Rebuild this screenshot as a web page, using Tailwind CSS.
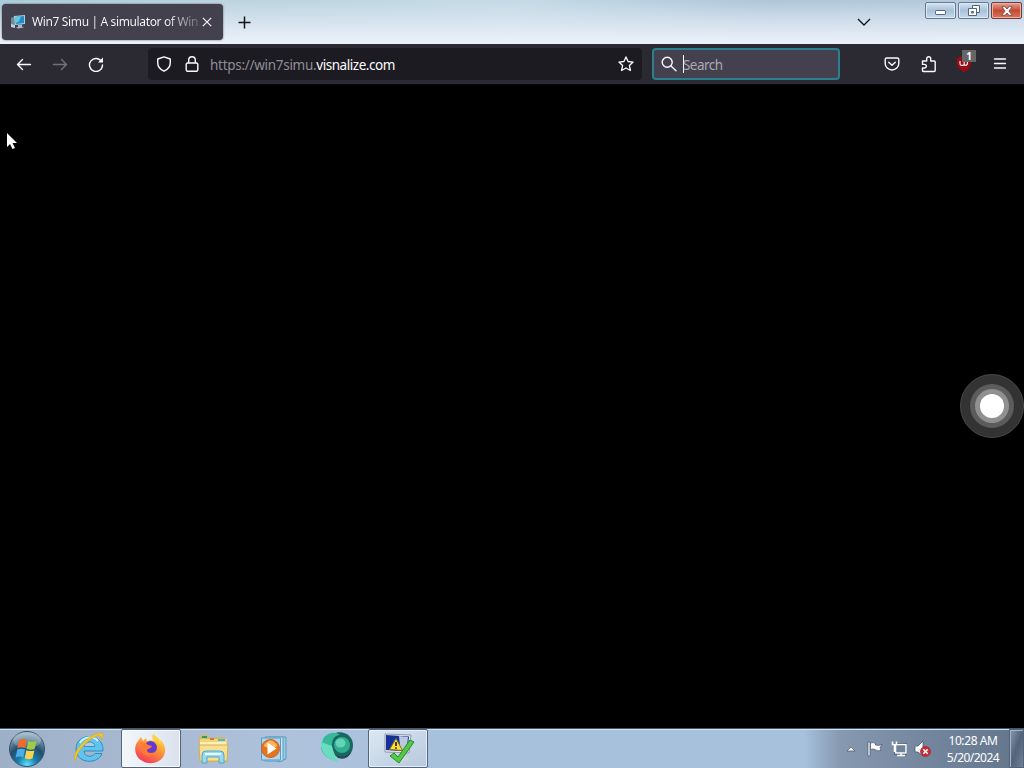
<!DOCTYPE html>
<html lang="en">
<head>
<meta charset="utf-8">
<title>Win7 Simu</title>
<script src="https://cdn.jsdelivr.net/npm/@tailwindcss/browser@4"></script>
</head>
<body class="bg-black overflow-hidden">
<div class="relative flex h-[768px] w-[1024px] flex-col overflow-hidden bg-black font-['Noto_Sans','Open_Sans',sans-serif]">
  <!-- Title bar -->
  <header class="flex h-11 shrink-0 items-start bg-[linear-gradient(90deg,#a9cbd5_0%,#bcd3de_22%,#c5dae5_50%,#aec6d8_75%,#b4cadd_100%)]">
    <div class="flex h-11 w-full items-start bg-linear-to-b from-transparent via-[#dde7f2]/75 to-[#edf2fb]">
      <div class="mt-1 ml-0.5 flex h-9 w-[221px] items-center rounded bg-[#42414d] pl-2 shadow-[0_0_2px_#4b5563]">
        <svg class="h-4 w-4 shrink-0" viewBox="0 0 16 16"><path d="M1 4l4-2v10l-4-1z" fill="#718a9d"/><path d="M4 2l11-1v9l-10 1z" fill="#a9cfe3"/><path d="M5 3l9-1v7l-8 1z" fill="#218cc8"/><path d="M5 3l6-.6-2 5-4 2z" fill="#64c6da"/><path d="M8 11l4-.5v2l2 1-6 1-2-1 2-.5z" fill="#a9bac5"/><path d="M1 10l4 1v3l-4-1z" fill="#bed1df"/></svg>
        <div class="ml-1.5 w-[166px] whitespace-nowrap bg-linear-to-r from-[#fbfbfe] from-80% to-[#fbfbfe]/25 bg-clip-text text-[12px] leading-5 tracking-[-0.36px] text-transparent">Win7 Simu | A simulator of Win</div>
        <svg class="ml-px h-4 w-4 shrink-0" viewBox="0 0 16 16" fill="none" stroke="#f4f4f8" stroke-width="1.2"><path d="M3.800 3.800l8.400 8.400M12.200 3.800l-8.400 8.400"/></svg>
      </div>
      <svg class="mt-[14px] ml-[13px] h-4 w-4" viewBox="0 0 16 16" stroke="#15141a" stroke-width="1.5"><path d="M2.500 8.500h12M8.500 2.500v12"/></svg>
      <svg class="mt-[14px] ml-auto h-4 w-4" viewBox="0 0 16 16" fill="none" stroke="#15141a" stroke-width="1.4"><path d="M2 5l6 6 6-6"/></svg>
      <div class="mt-0.5 mr-0.5 ml-[53px] flex gap-[2px]">
        <div class="flex h-[17px] w-[31px] items-center justify-center rounded-[2px] border border-[#66778f] bg-linear-to-b from-[#d5e3f1] via-[#a9c1d9] to-[#c4dbed] shadow-[inset_0_0_0_1px_#dceaf5]"><svg class="mt-1 h-[5px] w-[11px]" viewBox="0 0 11 5"><rect x=".5" y=".5" width="10" height="4" rx=".7" fill="#fff" stroke="#56667c"/></svg></div>
        <div class="flex h-[17px] w-[31px] items-center justify-center rounded-[2px] border border-[#66778f] bg-linear-to-b from-[#d5e3f1] via-[#a9c1d9] to-[#c4dbed] shadow-[inset_0_0_0_1px_#dceaf5]"><svg class="h-[11px] w-[12px]" viewBox="0 0 12 11" fill="none"><path d="M4.500.5h7v7h-3v-4h-4z" fill="#fff" stroke="#56667c"/><path d="M.5 3.500h8v7h-8z" fill="#fff" stroke="#56667c"/><path d="M3.500 6.500h2v1.500h-2z" fill="#8ea6c4" stroke="#56667c"/></svg></div>
        <div class="flex h-[17px] w-[31px] items-center justify-center rounded-[2px] border border-[#713a3c] bg-linear-to-b from-[#e5a093] via-[#c44b33] to-[#d9755b] shadow-[inset_0_0_0_1px_#efb1a4]"><svg class="h-[10px] w-[12px]" viewBox="0 0 12 10"><path d="M.8.700h3.200L6 3l2-2.300h3.200L7.900 5l3.300 4.300H8L6 7 4 9.300H.8L4.100 5z" fill="#fff" stroke="#714648" stroke-width=".8"/></svg></div>
      </div>
    </div>
  </header>
  <!-- Navigation toolbar -->
  <nav class="flex h-10 shrink-0 items-center bg-[#2b2a33] text-[13.5px]">
    <svg class="ml-4 h-4 w-4" viewBox="0 0 16 16" fill="none" stroke="#fbfbfe" stroke-width="1.4" stroke-linecap="round" stroke-linejoin="round"><path d="M14.500 8.500h-13M6.500 3.500l-5 5 5 5"/></svg>
    <svg class="ml-5 h-4 w-4" viewBox="0 0 16 16" fill="none" stroke="#73727a" stroke-width="1.4" stroke-linecap="round" stroke-linejoin="round"><path d="M1.500 8.500h13M9.500 3.500l5 5-5 5"/></svg>
    <svg class="ml-5 h-4 w-4" viewBox="0 0 16 16" fill="none" stroke="#fbfbfe" stroke-width="1.4" stroke-linecap="round"><path d="M13.500 5.500A6.500 6.500 0 1 0 14.500 9"/><path d="M15 1.500v5H10z" fill="#fbfbfe" stroke="none"/></svg>
    <div class="ml-11 flex h-8 w-[494px] items-center rounded bg-[#1c1b22]">
      <svg class="ml-2 h-4 w-4" viewBox="0 0 16 16" fill="none" stroke="#fbfbfe" stroke-width="1.4" stroke-linejoin="round"><path d="M8 .8L14.300 3v3.500c0 4-2.300 7-6.300 8.700C4 13.500 1.700 10.500 1.700 6.500V3z"/></svg>
      <svg class="ml-3 h-4 w-4" viewBox="0 0 16 16" fill="none" stroke="#fbfbfe" stroke-width="1.4"><rect x="2.200" y="7" width="11.600" height="8.200" rx="1.500"/><path d="M4.700 7V4a3.300 3.300 0 0 1 6.600 0v3"/></svg>
      <div class="mt-0.5 ml-[10px] w-[250px] whitespace-nowrap leading-5 tracking-[-0.46px] text-[#fbfbfe]"><span class="tracking-[-0.29px] text-[#8f8e96]">https://win7simu.</span>visnalize.com</div>
      <svg class="mr-2 ml-auto h-4 w-4" viewBox="0 0 16 16" fill="none" stroke="#fbfbfe" stroke-width="1.3" stroke-linejoin="round"><path d="M8 .9l2.100 4.600 5 .600-3.700 3.400 1 5L8 12l-4.400 2.500 1-5L.9 6.100l5-.600z"/></svg>
    </div>
    <div class="ml-[10px] flex h-8 w-[188px] items-center rounded border-2 border-[#29818d] bg-[#42414d]">
      <svg class="ml-[7px] h-4 w-4" viewBox="0 0 16 16" fill="none" stroke="#fbfbfe" stroke-width="1.400" stroke-linecap="round"><circle cx="6.200" cy="6.200" r="5"/><path d="M10 10l5 4.700"/></svg>
      <div class="ml-[6px] h-[18px] w-px bg-white"></div>
      <div class="mt-0.5 -ml-px leading-5 tracking-[-0.55px] text-[#aaa9b2]">Search</div>
    </div>
    <svg class="ml-11 h-4 w-4" viewBox="0 0 16 16" fill="none" stroke="#fbfbfe" stroke-width="1.400" stroke-linecap="round" stroke-linejoin="round"><path d="M2.500 2h11a1.300 1.300 0 0 1 1.300 1.300v4.200a6.800 6.500 0 0 1-13.600 0V3.300A1.300 1.300 0 0 1 2.500 2z"/><path d="M4.700 6.200L8 9.300l3.300-3.100"/></svg>
    <svg class="ml-5 h-[18px] w-[18px]" viewBox="0 0 18 18" fill="none" stroke="#fbfbfe" stroke-width="1.400" stroke-linejoin="round"><path d="M2.500 6h4.200V3.700a2 2 0 0 1 4 0V6h3.500q1 0 1 1v8.500q0 1-1 1H3.500q-1 0-1-1V13h2a1.800 1.800 0 0 0 0-3.600h-2z"/></svg>
    <div class="relative ml-4 h-5 w-5">
      <svg class="h-5 w-5" viewBox="0 0 20 20"><path d="M10 2l7 2v5c0 4.500-3 7.200-7 9-4-1.800-7-4.500-7-9V4z" fill="#980b12"/><path d="M6 7v2.800q0 1.500 1.500 1.500H9q1.200 0 1.200-1.500V7.500M10.200 9.800q0 1.500 1.300 1.500 2 0 2-2.200T11.500 7" fill="none" stroke="#eee" stroke-width="1.200"/></svg>
      <span class="absolute -top-[4px] left-[8px] flex h-[12px] w-[14px] items-center justify-center bg-[#666] text-[10px] leading-none font-bold text-white">1</span>
    </div>
    <svg class="ml-[18px] h-4 w-4" viewBox="0 0 16 16" stroke="#fbfbfe" stroke-width="1.300" stroke-linecap="round"><path d="M2.500 3h11M2.500 7.500h11M2.500 12h11"/></svg>
  </nav>
  <main class="grow border-t border-[#08080b] bg-black"></main>
  <!-- Taskbar -->
  <footer class="flex h-10 shrink-0 items-center border-t border-[#4a5568] bg-[linear-gradient(90deg,#9db0c8_0%,#a6b8d0_12%,#afc2dc_28%,#a7c1dd_43%,#a7c1dd_78.500%,#8699b1_82%,#75879e_90%,#62758b_100%)] shadow-[inset_0_1px_0_#d2e2f5]">
    <svg class="ml-2 h-[38px] w-[38px]" viewBox="0 0 38 38">
      <defs><radialGradient id="orb" cx=".5" cy=".95" r=".9"><stop stop-color="#60e5ff"/><stop offset=".3" stop-color="#187fae"/><stop offset=".6" stop-color="#244d6a"/><stop offset="1" stop-color="#8fafbf"/></radialGradient></defs>
      <circle cx="19" cy="19" r="17.500" fill="url(#orb)" stroke="#355168"/><ellipse cx="19" cy="10" rx="14" ry="8" fill="#fff" opacity=".22"/>
      <path d="M11 10.500q4-2.500 7.900-.5l-1.700 8q-3.500-1.500-7.700.2z" fill="#ef6a2c"/><path d="M20.300 10.900q3.700 1.800 8.200 0l-1.900 8q-4 1.600-8-.2z" fill="#9fcc45"/><path d="M9.300 19.500q4-1.700 7.700.1l-1.700 7.800q-3.800-1.800-7.700.1z" fill="#49aeea"/><path d="M18.400 20.200q3.700 1.700 8 .2l-1.900 8.100q-4 1.500-7.800-.3z" fill="#fcd14c"/>
    </svg>
    <svg class="ml-[26px] h-[34px] w-[34px] -translate-y-px" viewBox="0 0 34 34" fill="none">
      <path d="M31 20H12c.3 6 8 7 11 2.500h7C26 34 4 33 4 18 4 1 32 1 31 20z" fill="#62c4ee" stroke="#288ec3"/><path d="M12 15.500h11c-.5-6-10.500-6-11 0z" fill="#b4c9df" stroke="#3396c9"/><path d="M8 12c3-6 13-8 18-2" stroke="#c5f3ff" stroke-width="2"/><path d="M4 30C-3 25 14 4 28 2c4 0 4 3 1 7 1-4-1-5-4-4C16 8 3 22 4 30z" fill="#f0c82f" stroke="#d9a51c" stroke-width=".6"/>
    </svg>
    <div class="ml-[15px] flex h-[39px] w-[60px] items-center justify-center rounded-[2px] border border-[#53647d] bg-linear-to-r from-[#f2f7fa] to-[#dce2ed] shadow-[inset_0_0_0_1px_#f6faff]">
      <svg class="h-8 w-8 -translate-x-px" viewBox="0 0 32 32">
        <defs><linearGradient id="fox" x1=".8" y1="0" x2=".25" y2="1"><stop stop-color="#ffe84d"/><stop offset=".45" stop-color="#ff9838"/><stop offset="1" stop-color="#f1335d"/></linearGradient></defs>
        <path d="M4 8l3-4 2 4 3-3 1 3c3-1 5-1 7 0-2-3-2-5-1-7 3 2 6 4 7 7l1-1c3 4 5 8 4 12-2 13-21 15-28 4C0 17 1 12 4 8z" fill="url(#fox)"/>
        <circle cx="16.500" cy="14.500" r="6.500" fill="#643ad0"/><path d="M5 10c4-1 7-1 9 2l4 1c-1 3-4 2-5 4 0 4 7 4 10 0-2 7-10 8-14 3-3-3-2-6-1-8z" fill="#ff7a32"/><path d="M19 2c3 3 7 5 8 10-2-2-4-4-7-4z" fill="#ffd53d"/>
      </svg>
    </div>
    <svg class="ml-4 h-8 w-8" viewBox="0 0 32 32">
      <path d="M2 5l2-3h7l2 3h5V4h10v3h2v22H2z" fill="#d7b85f"/><path d="M3 6h27v21H3z" fill="#f0d37f"/><path d="M3 9h26v4H3z" fill="#fff0b2"/><path d="M2 12h29l-1 16H3z" fill="#f8df91" stroke="#cfae56"/><path d="M5 4h5" stroke="#27a16c" stroke-width="2"/><path d="M13 6h4" stroke="#d87634" stroke-width="2"/><path d="M21 7h7" stroke="#4cb7e2" stroke-width="2"/><path d="M5 30v-8q0-4 4-4h14q4 0 4 4v8h-5v-6H10v6z" fill="#9bd8ef" stroke="#4ba8cb"/><path d="M8 21h16" stroke="#e3faff" stroke-width="2"/>
    </svg>
    <svg class="ml-[31px] h-7 w-7" viewBox="0 0 28 28">
      <path d="M8 2h18v22l-8 3z" fill="#9ac9e3" stroke="#5c9cbd"/><path d="M5 2h18v24H5z" fill="#c8e5f2" stroke="#589cc2"/><path d="M1.500 3h19v22h-19z" fill="#b2d5e8" stroke="#589cc2"/><circle cx="10.500" cy="13.500" r="9" fill="#e9731b" stroke="#c8642c"/><path d="M3.500 11q7-11 14 0-7 4-14 0z" fill="#ffb55d"/><path d="M7.500 7.500l9 6-9 6z" fill="#fff"/>
    </svg>
    <svg class="mb-1 ml-[32px] h-[34px] w-[34px]" viewBox="0 0 34 34">
      <path d="M13 4C22-1 33 5 33 15c0 9-6 14-13 13-8-2-11-9-10-17z" fill="#1b665f"/><path d="M3 9C7 2 16 1 20 5c-6 0-8 5-8 11 1 7 3 10 6 15C10 30 1 25 1 17z" fill="#35b999"/><path d="M1 12l11 4c1 6 4 11 7 16C8 30 0 23 1 12z" fill="#68ddc0"/><circle cx="22" cy="15" r="8" fill="#2fae91"/><ellipse cx="20.500" cy="13" rx="5" ry="4.500" fill="#7be2c7" opacity=".7"/><path d="M16 25q8 4 15-3-4 9-13 6z" fill="#244957"/>
    </svg>
    <div class="ml-[14px] flex h-[39px] w-[60px] items-center justify-center rounded-[2px] border border-[#53647d] bg-linear-to-br from-[#dce8f2] to-[#b7c8de] shadow-[inset_0_0_0_1px_#e6f0fa]">
      <svg class="h-[34px] w-[34px] -translate-y-px" viewBox="0 0 34 34"><path d="M4 3l26 1-2 18-24-1z" fill="#e3e7ed" stroke="#8f9bad"/><path d="M5 4l23 1.500-1.500 15L5 19z" fill="#16309b"/><path d="M18 5l9 1-1.500 14-6-1z" fill="#bac9df"/><path d="M11 26l13-1 4 3-11 4z" fill="#d1d6d9"/><path d="M15 7.500L21.500 19.500 8.500 18.500z" fill="#ffe038" stroke="#887015"/><path d="M15 11v4M15 16.200v1.500" stroke="#222" stroke-width="1.700"/><path d="M9 25l4-3 4 4L29 9l4 2-15 21z" fill="#55c945" stroke="#258b2d"/></svg>
    </div>
    <!-- Notification area -->
    <svg class="ml-auto h-[6px] w-[10px]" viewBox="0 0 10 6"><path d="M1 5l4-4 4 4z" fill="#fff" stroke="#44546b" stroke-width=".7"/></svg>
    <svg class="ml-[11px] h-4 w-4" viewBox="0 0 16 16"><path d="M1 1h2v14H1z" fill="#fff" stroke="#41536a" stroke-width=".7"/><path d="M3.500 2q3-1 5 .5v1.500q3 1 6.500-.5l-2 3 1 3q-4 1-6-1-2-1-4.500 0z" fill="#fff" stroke="#41536a" stroke-width=".7"/></svg>
    <svg class="ml-2 h-4 w-4" viewBox="0 0 16 16" fill="none"><rect x="4.500" y="3.500" width="10.500" height="8.500" stroke="#34465d" stroke-width="3"/><rect x="4.500" y="3.500" width="10.500" height="8.500" fill="#718399" stroke="#fff" stroke-width="1.500"/><path d="M6 14.500h8M10 12v2M1.500.5v3h4v-3M3.500 3v8" stroke="#fff" stroke-width="1.500"/></svg>
    <svg class="ml-[7px] h-[18px] w-[18px]" viewBox="0 0 18 18"><path d="M1 6h3l5-5v15l-5-4H1z" fill="#fff" stroke="#46586f" stroke-width=".8"/><circle cx="11.500" cy="11.500" r="5" fill="#cf2931" stroke="#8f2d34" stroke-width=".7"/><path d="M9.300 9.300l4.400 4.400M13.700 9.300l-4.400 4.400" stroke="#fff" stroke-width="1.600"/></svg>
    <div class="ml-[14px] w-[54px] text-center text-[12px] leading-[17px] tracking-[-0.4px] whitespace-nowrap text-white"><div>10:28 AM</div><div class="tracking-[-0.52px]">5/20/2024</div></div>
    <div class="ml-[9px] h-[39px] w-[15px] border border-[#526278] bg-linear-to-br from-[#8b9cb1] via-[#52637a] to-[#718297] shadow-[inset_1px_1px_0_#a4b4c6]"></div>
  </footer>
  <!-- Floating touch control -->
  <div class="absolute top-[374px] left-[960px] flex h-16 w-16 items-center justify-center rounded-full border border-[#484848] bg-[#333]">
    <div class="flex h-11 w-11 items-center justify-center rounded-full bg-[#5c5c5c]"><div class="flex h-[34px] w-[34px] items-center justify-center rounded-full bg-[#909090]"><div class="h-6 w-6 rounded-full bg-white"></div></div></div>
  </div>
  <!-- Mouse pointer -->
  <svg class="absolute top-[132px] left-[6px] h-[19px] w-3" viewBox="0 0 12 19"><path d="M1 1v14l3-3 2.500 5 2.500-1-2.500-5H11z" fill="#fff"/></svg>
</div>
</body>
</html>
